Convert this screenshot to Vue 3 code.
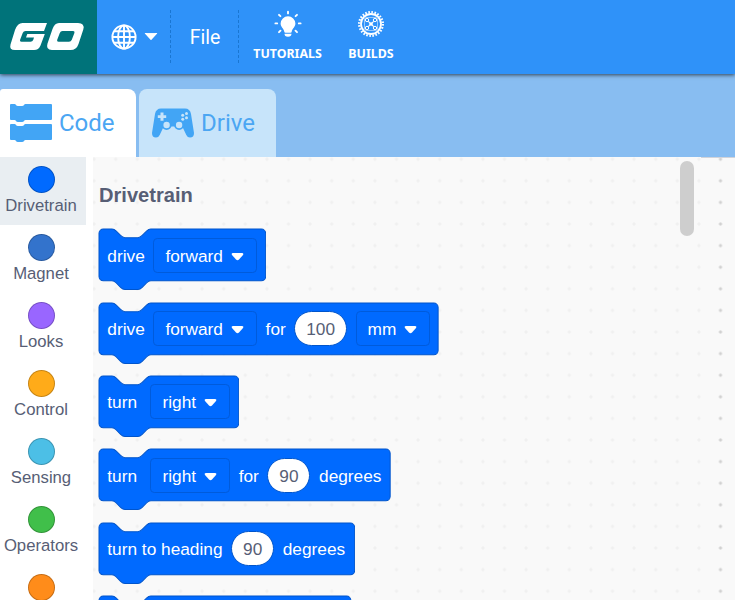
<script setup>
const categories = [
  { name: 'Drivetrain', color: '#006aff', active: true },
  { name: 'Magnet', color: '#3373cc' },
  { name: 'Looks', color: '#9966ff' },
  { name: 'Control', color: '#ffab19' },
  { name: 'Sensing', color: '#4cbfe6' },
  { name: 'Operators', color: '#40bf4a' },
  { name: '', color: '#ff8c1a' },
]

const text = (value) => ({ kind: 'text', value })
const menu = (value) => ({ kind: 'menu', value })
const num = (value) => ({ kind: 'num', value })

// Widths are in block units; one unit is 1.08px on screen.
const blocks = [
  { width: 154.3, parts: [text('drive'), menu('forward')] },
  { width: 314, parts: [text('drive'), menu('forward'), text('for'), num('100'), menu('mm')] },
  { width: 129.3, parts: [text('turn'), menu('right')] },
  { width: 269.6, parts: [text('turn'), menu('right'), text('for'), num('90'), text('degrees')] },
  { width: 236.7, parts: [text('turn to heading'), num('90'), text('degrees')] },
  { width: 233.2, parts: [] },
]

const outline = (w) =>
  `M0,4 A4,4 0 0,1 4,0 H12 c2,0 3,1 4,2 l4,4 c1,1 2,2 4,2 h12 c2,0 3,-1 4,-2 l4,-4 c1,-1 2,-2 4,-2 H${w - 4} a4,4 0 0,1 4,4 v40 a4,4 0 0,1 -4,4 H48 c-2,0 -3,1 -4,2 l-4,4 c-1,1 -2,2 -4,2 h-12 c-2,0 -3,-1 -4,-2 l-4,-4 c-1,-1 -2,-2 -4,-2 H4 a4,4 0 0,1 -4,-4 z`
</script>

<template>
  <div class="app">
    <header class="topbar">
      <div class="logo">
        <svg width="77" height="30" viewBox="0 0 77 30" fill="#fff" fill-rule="evenodd">
          <path d="M13.500 2H38L35 10H16.500Q14.500 10 13.700 12L11.200 18.500Q10.500 20.700 12.500 20.700H21.500Q23.500 20.700 24.200 19L25 16.500H17L18.300 13H35.800L31.500 24.500Q29.700 29 25 29H6Q0 29 1.500 23.500L6 9Q8.500 2 13.500 2Z" />
          <path d="M50 2H69Q76 2 74.300 8.500L69.500 23Q67.500 29 61.500 29H43Q36.500 29 38.500 22.500L43.500 8Q45.500 2 50 2ZM53.500 10Q51.500 10 50.800 12L48.300 18.500Q47.600 20.700 49.600 20.700H60Q62 20.700 62.800 18.700L65.300 12.200Q66 10 64 10Z" />
        </svg>
      </div>
      <div class="language">
        <svg width="26" height="26" viewBox="0 0 26 26" fill="none" stroke="#fff" stroke-width="1.900">
          <circle cx="13" cy="13" r="11.600" />
          <ellipse cx="13" cy="13" rx="5.900" ry="11.600" />
          <path d="M13 1v24M1 13h24M3 7.200h20M3 18.800h20" />
        </svg>
        <svg width="14" height="8" viewBox="0 0 14 8"><path d="M1.500 .200h11L7 6.200z" fill="#fff" stroke="#fff" stroke-width="1.300" stroke-linejoin="round" /></svg>
      </div>
      <div class="file">File</div>
      <div class="action tutorials">
        <svg width="28" height="28" viewBox="0 0 28 28">
          <path d="M14 6.300a7.400 7.400 0 0 0-7.400 7.300c0 3.500 3.200 5 3.700 8.100q.1 1 1.100 1h5.200q1 0 1.100-1c.500-3.100 3.700-4.600 3.700-8.100A7.400 7.400 0 0 0 14 6.300zM10.500 23.800h7q0 3-3.500 3t-3.500-3z" fill="#fff" />
          <path d="M14 1.700v1.700M5 4.800l1.400 1.400M23 4.800l-1.400 1.400M1.400 13.400h1.800M24.800 13.400h1.800M5 22.200l1.500-1.500M23 22.200l-1.500-1.500" stroke="#fff" stroke-width="1.900" stroke-linecap="round" />
        </svg>
        <span>TUTORIALS</span>
      </div>
      <div class="action builds">
        <svg width="28" height="28" viewBox="0 0 28 28" fill="none" stroke="#fff">
          <circle cx="14" cy="14" r="11.900" stroke-width="2.200" stroke-dasharray="1.600 1.516" />
          <circle cx="14" cy="14" r="10" stroke-width="1.800" />
          <g stroke-width="1">
            <rect x="7.500" y="7.500" width="13" height="13" rx="2" opacity=".5" />
            <circle cx="10" cy="10" r="1.700" /><circle cx="18" cy="10" r="1.700" />
            <circle cx="10" cy="18" r="1.700" /><circle cx="18" cy="18" r="1.700" />
            <path d="M11.300 11.300l5.400 5.400M16.700 11.300l-5.400 5.400" stroke-width="1.200" />
          </g>
          <circle cx="14" cy="14" r="1.800" fill="#fff" stroke="none" />
        </svg>
        <span>BUILDS</span>
      </div>
    </header>

    <nav class="tabs">
      <div class="tab code">
        <svg width="42" height="38" viewBox="0 0 42 38" fill="#42a5f5">
          <path id="strip" d="M1 0H4.500Q5.500 0 6 1Q6.500 2 8 2H12Q13.500 2 14 1Q14.500 0 15.500 0H41Q42 0 42 1V15Q42 16 41 16H15.500Q14.500 16 14 17Q13.500 18 12 18H8Q6.500 18 6 17Q5.500 16 4.500 16H1Q0 16 0 15V1Q0 0 1 0Z" />
          <use href="#strip" y="20" />
        </svg>
        <span>Code</span>
      </div>
      <div class="tab drive">
        <svg width="42" height="30" viewBox="0 0 42 30">
          <path d="M9 .500H33Q38 .500 39 6L42 25Q42 29.500 38 29.500Q35.500 29.500 34.300 27L31 20L27 18.500H15L11 20L7.700 27Q6.500 29.500 4 29.500Q0 29.500 0 25L3 6Q4 .500 9 .500Z" fill="#42a5f5" />
          <g fill="#c7e4fa">
            <path d="M8.500 4.500h3v2.700h2.700v2.800h-2.700v2.700h-3V10H5.800V7.200h2.700z" />
            <circle cx="30.700" cy="7.300" r="1.500" /><circle cx="34.500" cy="5.600" r="1.500" />
            <circle cx="30.700" cy="11.200" r="1.500" /><circle cx="34.500" cy="9.700" r="1.500" />
          </g>
          <g fill="#c7e4fa" stroke="#42a5f5" stroke-width="1.800"><circle cx="14.600" cy="17" r="4.100" /><circle cx="27.100" cy="17" r="4.100" /></g>
        </svg>
        <span>Drive</span>
      </div>
    </nav>

    <main class="editor">
      <aside class="categories">
        <div v-for="c in categories" :key="c.color" class="category" :class="{ active: c.active }">
          <i :style="{ background: c.color }"></i>
          <span>{{ c.name }}</span>
        </div>
      </aside>
      <section class="canvas">
        <svg class="grid" width="642" height="443">
          <defs>
            <pattern id="dots" x="-9.700" y="-8.600" width="21.600" height="21.600" patternUnits="userSpaceOnUse">
              <path d="M9 10.800h3.600M10.800 9v3.600" stroke="#eeeeee" stroke-width="1.200" />
            </pattern>
            <pattern id="dots-dark" x="-9.700" y="-8.600" width="21.600" height="21.600" patternUnits="userSpaceOnUse">
              <path d="M9 10.800h3.600M10.800 9v3.600" stroke="#c8c8c8" stroke-width="1.200" />
            </pattern>
          </defs>
          <rect width="615" height="443" fill="url(#dots)" />
          <rect x="615" width="27" height="443" fill="url(#dots-dark)" />
          <path d="M608 .500h34" stroke="#d0d3da" />
        </svg>
        <h2>Drivetrain</h2>
        <div class="blocks">
          <div v-for="(b, i) in blocks" :key="i" class="block">
            <svg class="shape" :width="b.width * 1.08 + 2" height="64">
              <path :d="outline(b.width)" transform="translate(1 1) scale(1.08)" fill="#006aff" stroke="#0055cc" stroke-width=".930" />
            </svg>
            <template v-for="(p, j) in b.parts" :key="j">
              <span v-if="p.kind === 'text'" class="label">{{ p.value }}</span>
              <span v-else-if="p.kind === 'num'" class="num">{{ p.value }}</span>
              <span v-else class="menu">{{ p.value }}
                <svg width="13" height="9" viewBox="0 0 13 9"><path d="M2 1h9q2 .200 1 2L8 7.500Q6.500 9 5 7.500L1 3Q0 1.200 2 1z" fill="#fff" /></svg>
              </span>
            </template>
          </div>
        </div>
        <div class="scrollbar"></div>
      </section>
    </main>
  </div>
</template>

<style>
body { overflow: hidden; }
</style>

<style scoped>
.app {
  width: 735px;
  height: 600px;
  overflow: hidden;
  display: flex;
  flex-direction: column;
  background: #88bdf1;
  font-family: "Liberation Sans", Arial, sans-serif;
}
.topbar {
  flex: none;
  height: 74px;
  display: flex;
  background: #2f92f9;
  color: #fff;
  box-shadow: 0 1px 4px rgba(0, 0, 0, .65);
}
.logo {
  width: 97px;
  box-sizing: border-box;
  padding: 21px 0 0 9px;
  background: #00737a;
}
.language {
  width: 74px;
  box-sizing: border-box;
  display: flex;
  align-items: center;
  gap: 7px;
  padding-left: 14px;
  position: relative;
}
.language::after, .file::after {
  content: "";
  position: absolute;
  right: 0;
  top: 10px;
  height: 53px;
  width: 1px;
  background: repeating-linear-gradient(#1976d2 0 3px, transparent 3px 5px);
}
.file {
  position: relative;
  width: 68px;
  line-height: 76px;
  text-align: center;
  font-family: Roboto, sans-serif;
  font-size: 19.5px;
}
.action {
  display: flex;
  flex-direction: column;
  align-items: center;
  padding-top: 10px;
  font: bold 12.4px/16px "Noto Sans", sans-serif;
}
.action span { margin-top: 8px; }
.tutorials { width: 97px; }
.builds { width: 70px; }
.tabs {
  flex: none;
  height: 68px;
  padding-top: 15px;
  display: flex;
  gap: 3px;
}
.tab {
  box-sizing: border-box;
  display: flex;
  align-items: center;
  border-radius: 8px 8px 0 0;
  font-family: Roboto, sans-serif;
  font-size: 24px;
  color: #4ba6f3;
}
.code { width: 136px; padding-left: 10px; gap: 7px; border-top-left-radius: 3px; background: #fff; }
.drive { width: 137px; padding-left: 13px; gap: 7px; background: #c7e4fa; }
.editor {
  flex: none;
  height: 443px;
  display: flex;
  overflow: hidden;
  background: #fff;
}
.categories { width: 86px; flex: none; }
.category {
  height: 68px;
  width: 86px;
  display: flex;
  flex-direction: column;
  align-items: center;
  box-sizing: border-box;
  padding: 9px 4px 0 0;
  font-size: 16.7px;
  line-height: 20px;
  color: #575e75;
}
.category.active { background: #e9eef2; }
.category i {
  width: 27px;
  height: 27px;
  box-sizing: border-box;
  border: 1px solid rgba(0, 0, 0, .22);
  border-radius: 50%;
}
.category span { margin-top: 3px; }
.canvas {
  position: relative;
  margin-left: 7px;
  width: 642px;
  overflow: hidden;
  background: #f9f9f9;
}
.grid { position: absolute; inset: 0; }
h2 {
  position: relative;
  margin: 26px 0 0 6px;
  font-size: 20.1px;
  line-height: 24px;
  color: #575e75;
}
.blocks {
  position: relative;
  display: flex;
  flex-direction: column;
  gap: 21.6px;
  padding: 22.2px 0 0 5.7px;
}
.block {
  position: relative;
  flex: none;
  height: 51.8px;
  display: flex;
  align-items: center;
  gap: 8.64px;
  padding-left: 8.64px;
  font-size: 17.28px;
  color: #fff;
}
.shape { position: absolute; left: -1px; top: -1px; }
.label { position: relative; white-space: nowrap; padding-top: 2px; }
.label:nth-of-type(1) { min-width: 34.5px; }
.menu, .num {
  position: relative;
  box-sizing: border-box;
  height: 35px;
  display: flex;
  align-items: center;
  padding-top: 2px;
}
.menu {
  gap: 8px;
  padding-left: 11px;
  padding-right: 12px;
  border: 1px solid #005bdb;
  border-radius: 4.3px;
}
.num {
  justify-content: center;
  padding-left: 10.9px;
  padding-right: 10.9px;
  border: 1px solid #0055cc;
  border-radius: 18px;
  background: #fff;
  color: #575e75;
}
.scrollbar {
  position: absolute;
  left: 587px;
  top: 4px;
  width: 14px;
  height: 75px;
  border-radius: 7px;
  background: #cecece;
}
</style>
